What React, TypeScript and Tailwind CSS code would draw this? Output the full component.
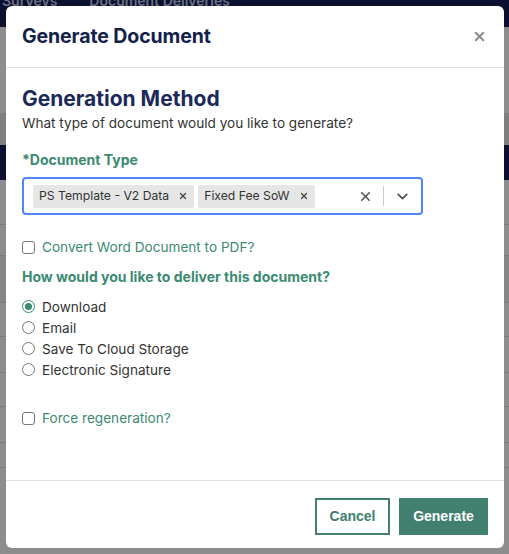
import { X, ChevronDown } from "lucide-react";

const options = ["Download", "Email", "Save To Cloud Storage", "Electronic Signature"];

function Checkbox({ label }: { label: string }) {
  return (
    <label className="flex items-center gap-[7px]">
      <span className="h-[13px] w-[13px] rounded-[3px] border border-[#767676] bg-white" />
      <span className="text-[13.6px] text-[#3b8a72]">{label}</span>
    </label>
  );
}

function Chip({ text }: { text: string }) {
  return (
    <span className="flex h-[23px] items-center gap-[9px] rounded-[2px] bg-[#e6e6e6] pl-[6px] pr-[6px] text-[12.2px] text-[#333]">
      {text}
      <X size={10} strokeWidth={3} className="text-[#444]" />
    </span>
  );
}

export default function App() {
  return (
    <div className="relative h-[554px] w-[509px] overflow-hidden font-['Inter',sans-serif]">
      {/* dimmed page behind the modal */}
      <div className="flex h-full flex-col bg-[#8d8d8d]">
        <div className="flex h-[27px] gap-[32px] bg-[#0b1030] px-[2px] text-[14px] font-semibold leading-[12px] text-[#6a7084]">
          <span className="-mt-[5px]">Surveys</span>
          <span className="-mt-[5px]">Document Deliveries</span>
        </div>
        <div className="h-[86px]" />
        <div className="h-[32px] bg-[#7f7f7f]" />
        <div className="h-[35px] bg-[#0b1030]" />
        <div className="h-[45px] border-b border-[#7a7a7a]" />
        <div className="h-[31px] border-b border-[#7a7a7a]" />
        <div className="h-[47px] bg-[#868686] border-b border-[#7a7a7a]" />
        <div className="h-[34px] border-b border-[#7a7a7a]" />
        <div className="h-[36px] border-b border-[#7a7a7a]" />
        <div className="h-[34px] border-b border-[#7a7a7a]" />
        <div className="h-[36px] border-b border-[#7a7a7a]" />
        <div className="h-[25px] border-b border-[#7a7a7a]" />
      </div>

      {/* modal */}
      <div className="absolute left-[6px] top-[6px] flex h-[542px] w-[498px] flex-col rounded-[6px] bg-white">
        <div className="flex h-[62px] items-center justify-between border-b border-[#dee2e6] pl-[16px] pr-[17px]">
          <h2 className="text-[19.5px] font-bold tracking-[-0.1px] text-[#13224a]">Generate Document</h2>
          <X size={15} strokeWidth={3.2} className="text-[#8a8a8a]" />
        </div>

        <div className="flex flex-1 flex-col px-[16px] pt-[18px]">
          <h3 className="text-[21px] font-bold leading-[26px] text-[#1b2a58]">Generation Method</h3>
          <p className="mt-[2px] text-[13.6px] leading-[18px] text-[#333]">What type of document would you like to generate?</p>

          <p className="mt-[19px] text-[14px] font-bold leading-[18px] text-[#3b8a72]">*Document Type</p>

          <div className="mt-[8px] flex h-[38px] w-[401px] items-center rounded-[4px] border-2 border-[#4f88f6] pl-[9px]">
            <div className="flex flex-1 gap-[4px]">
              <Chip text="PS Template - V2 Data" />
              <Chip text="Fixed Fee SoW" />
            </div>
            <X size={15} strokeWidth={2.6} className="mr-[10px] text-[#555]" />
            <span className="h-[20px] w-px bg-[#ccc]" />
            <ChevronDown size={17} strokeWidth={2.6} className="mx-[10px] text-[#555]" />
          </div>

          <div className="mt-[22px]">
            <Checkbox label="Convert Word Document to PDF?" />
          </div>

          <p className="mt-[11px] text-[14px] font-bold leading-[18px] text-[#3b8a72]">How would you like to deliver this document?</p>

          <div className="mt-[10px] flex flex-col">
            {options.map((o, i) => (
              <label key={o} className="flex h-[21px] items-center gap-[7px]">
                <span
                  className={`flex h-[13px] w-[13px] items-center justify-center rounded-full border ${
                    i === 0 ? "border-[#3b8a72]" : "border-[#767676]"
                  }`}
                >
                  {i === 0 && <span className="h-[7px] w-[7px] rounded-full bg-[#3b8a72]" />}
                </span>
                <span className="text-[13.6px] text-[#333]">{o}</span>
              </label>
            ))}
          </div>

          <div className="mt-[28px]">
            <Checkbox label="Force regeneration?" />
          </div>
        </div>

        <div className="flex h-[68px] items-center justify-end gap-[9px] border-t border-[#dee2e6] pr-[16px] pt-[3px] font-['Liberation_Sans',sans-serif]">
          <button className="h-[37px] w-[75px] border-2 border-[#41806f] text-[14px] font-bold text-[#41806f]">Cancel</button>
          <button className="h-[37px] w-[89px] bg-[#41806f] text-[14px] font-bold text-white">Generate</button>
        </div>
      </div>
    </div>
  );
}
